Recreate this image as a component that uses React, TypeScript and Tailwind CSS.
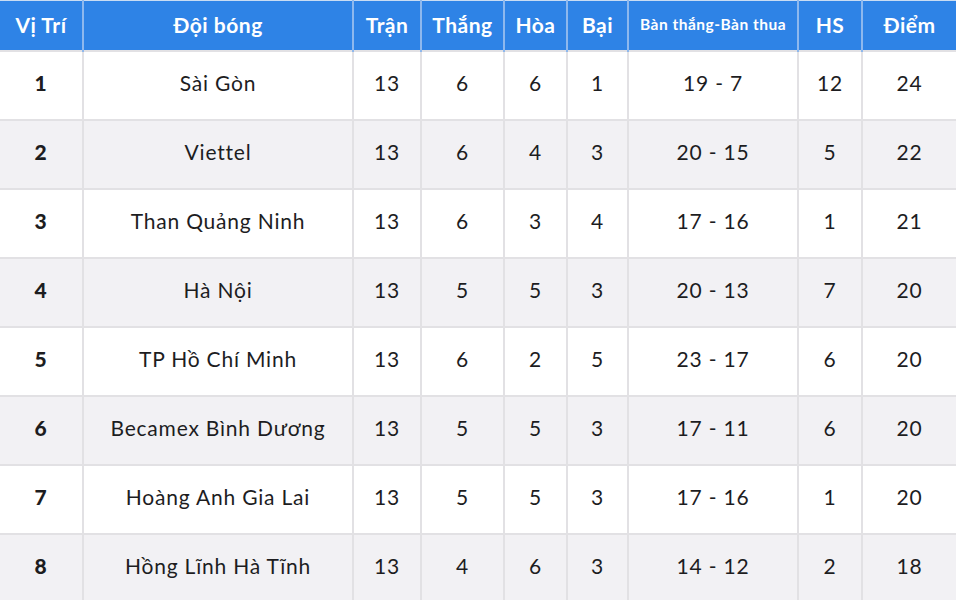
import React from "react";

const rows = [
  ["1", "Sài Gòn", "13", "6", "6", "1", "19 - 7", "12", "24"],
  ["2", "Viettel", "13", "6", "4", "3", "20 - 15", "5", "22"],
  ["3", "Than Quảng Ninh", "13", "6", "3", "4", "17 - 16", "1", "21"],
  ["4", "Hà Nội", "13", "5", "5", "3", "20 - 13", "7", "20"],
  ["5", "TP Hồ Chí Minh", "13", "6", "2", "5", "23 - 17", "6", "20"],
  ["6", "Becamex Bình Dương", "13", "5", "5", "3", "17 - 11", "6", "20"],
  ["7", "Hoàng Anh Gia Lai", "13", "5", "5", "3", "17 - 16", "1", "20"],
  ["8", "Hồng Lĩnh Hà Tĩnh", "13", "4", "6", "3", "14 - 12", "2", "18"],
];

const widths = [83, 270, 68, 83, 63, 61, 170, 64, 94];
const heads = ["Vị Trí", "Đội bóng", "Trận", "Thắng", "Hòa", "Bại", "Bàn thắng-Bàn thua", "HS", "Điểm"];

export default function App() {
  return (
    <div className="w-[956px] h-[600px] overflow-hidden bg-white" style={{ fontFamily: "Lato, 'Noto Sans', sans-serif" }}>
      <table className="border-collapse table-fixed w-[956px]">
        <colgroup>
          {widths.map((w, i) => (
            <col key={i} style={{ width: w }} />
          ))}
        </colgroup>
        <thead>
          <tr className="h-[50px] bg-[#2e83e6] border-t border-[#c9dcf3]">
            {heads.map((h, i) => (
              <th
                key={i}
                className={`border-x-2 border-[#8db8ee] text-white font-bold align-middle text-center p-0 pb-[2px] tracking-[0.5px] whitespace-nowrap ${i === 6 ? "text-[15.5px]" : "text-[21px]"} first:border-l-0 last:border-r-0`}
              >
                {h}
              </th>
            ))}
          </tr>
        </thead>
        <tbody>
          {rows.map((r, ri) => (
            <tr key={ri} className={`h-[69px] ${ri % 2 === 1 ? "bg-[#f2f1f4]" : "bg-white"}`}>
              {r.map((c, ci) => (
                <td
                  key={ci}
                  className={`border-2 border-[#e2e1e4] text-center align-middle p-0 pb-[4px] text-[#1d1d1f] text-[21px] tracking-[0.8px] first:border-l-0 last:border-r-0 ${ci === 0 ? "font-black" : "font-normal"}`}
                >
                  {c}
                </td>
              ))}
            </tr>
          ))}
        </tbody>
      </table>
    </div>
  );
}
